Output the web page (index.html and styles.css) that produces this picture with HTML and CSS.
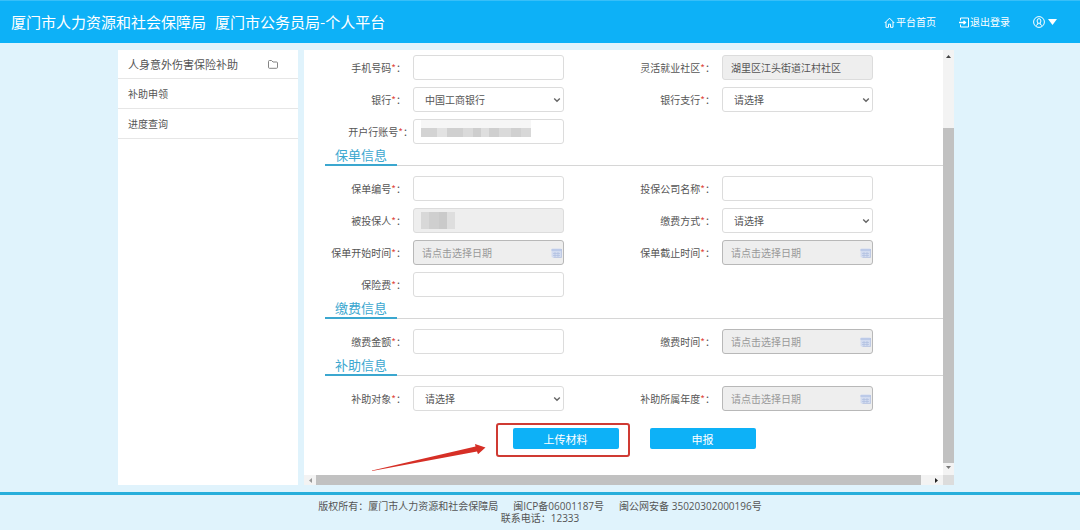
FILE: index.html
```html
<!DOCTYPE html>
<html lang="zh-CN">
<head>
<meta charset="utf-8">
<meta name="viewport" content="width=device-width, initial-scale=1">
<title>厦门市人力资源和社会保障局 个人平台</title>
<link rel="stylesheet" href="styles.css">
</head>
<body>
<svg class="sprite" aria-hidden="true">
  <symbol id="chevron" viewBox="0 0 8 6"><path d="M1.2 1.4 4 4.2l2.800-2.800" fill="none" stroke="#666" stroke-width="1.400"/></symbol>
  <symbol id="calendar" viewBox="0 0 11 10"><rect x=".5" y=".5" width="10" height="9" rx="1" fill="#d3dcf0"/><path d="M.5 1h10v2H.5z" fill="#bccae8"/><path d="M2 5.500h7M2 7.500h7M4 4v5M7 4v5M10.500 1v8.500h-8" fill="none" stroke="#b0bfe0" stroke-width=".7"/></symbol>
</svg>

<header class="topbar">
  <h1 class="brand"><span>厦门市人力资源和社会保障局</span><span>厦门市公务员局-个人平台</span></h1>
  <nav class="topnav">
    <a href="#"><svg width="11" height="11" viewBox="0 0 11 11" fill="none" stroke="#fff"><path d="M.7 6 5.500 1.200 10.300 6M2 5v5.300h2.500V7.200h2v3.100H9V5"/></svg>平台首页</a>
    <a href="#"><svg width="10" height="11" viewBox="0 0 10 11" fill="none" stroke="#fff"><path d="M1.500 3.500v-2.500h8v9h-8V7.500"/><path d="M0 5.500h6M4.500 3.800l2 1.700-2 1.700" stroke-width="1.300"/></svg>退出登录</a>
    <button class="user" type="button" aria-label="用户菜单"><svg width="12" height="12" viewBox="0 0 12 12" fill="none" stroke="#fff"><circle cx="6" cy="6" r="5.400"/><ellipse cx="6" cy="5" rx="1.900" ry="2.400"/><path d="M4.800 7v1.300L3 9.500M7.200 7v1.300L9 9.500"/></svg><svg width="9" height="6" viewBox="0 0 9 6"><path d="M0 0h9L4.500 6z" fill="#fff"/></svg></button>
  </nav>
</header>

<main class="layout">
  <aside class="sidebar">
    <a class="side-item side-title" href="#">人身意外伤害保险补助<svg width="10" height="9" viewBox="0 0 10 9" fill="none" stroke="#777" stroke-width=".9"><path d="M.5 7.300V1.500q0-1 1-1h2L5 2h3.500q1 0 1 1v4.300q0 1-1 1h-7q-1 0-1-1z"/></svg></a>
    <a class="side-item" href="#">补助申领</a>
    <a class="side-item" href="#">进度查询</a>
  </aside>

  <section class="panel">
    <form class="form">
      <div class="fields">
        <div class="field"><label for="phone">手机号码<i>*</i>：</label><div class="control"><input id="phone" type="text"></div></div>
        <div class="field"><label for="community">灵活就业社区<i>*</i>：</label><div class="control"><input id="community" type="text" value="湖里区江头街道江村社区" readonly></div></div>
        <div class="field"><label for="bank">银行<i>*</i>：</label><div class="control"><select id="bank"><option>中国工商银行</option></select><svg class="chevron"><use href="#chevron"/></svg></div></div>
        <div class="field"><label for="branch">银行支行<i>*</i>：</label><div class="control"><select id="branch"><option>请选择</option></select><svg class="chevron"><use href="#chevron"/></svg></div></div>
        <div class="field field-long"><label for="account">开户行账号<i>*</i>：</label><div class="control"><input id="account" type="text"><span class="mask mask-account"></span></div></div>
      </div>

      <h2 class="section"><span>保单信息</span></h2>
      <div class="fields">
        <div class="field"><label for="policy">保单编号<i>*</i>：</label><div class="control"><input id="policy" type="text"></div></div>
        <div class="field"><label for="company">投保公司名称<i>*</i>：</label><div class="control"><input id="company" type="text"></div></div>
        <div class="field"><label for="insured">被投保人<i>*</i>：</label><div class="control"><input id="insured" type="text" readonly><span class="mask mask-name"></span></div></div>
        <div class="field"><label for="method">缴费方式<i>*</i>：</label><div class="control"><select id="method"><option>请选择</option></select><svg class="chevron"><use href="#chevron"/></svg></div></div>
        <div class="field"><label for="start">保单开始时间<i>*</i>：</label><div class="control"><input id="start" class="date" type="text" placeholder="请点击选择日期" readonly><svg class="calendar"><use href="#calendar"/></svg></div></div>
        <div class="field"><label for="end">保单截止时间<i>*</i>：</label><div class="control"><input id="end" class="date" type="text" placeholder="请点击选择日期" readonly><svg class="calendar"><use href="#calendar"/></svg></div></div>
        <div class="field"><label for="premium">保险费<i>*</i>：</label><div class="control"><input id="premium" type="text"></div></div>
      </div>

      <h2 class="section"><span>缴费信息</span></h2>
      <div class="fields">
        <div class="field"><label for="amount">缴费金额<i>*</i>：</label><div class="control"><input id="amount" type="text"></div></div>
        <div class="field"><label for="paytime">缴费时间<i>*</i>：</label><div class="control"><input id="paytime" class="date" type="text" placeholder="请点击选择日期" readonly><svg class="calendar"><use href="#calendar"/></svg></div></div>
      </div>

      <h2 class="section"><span>补助信息</span></h2>
      <div class="fields">
        <div class="field"><label for="target">补助对象<i>*</i>：</label><div class="control"><select id="target"><option>请选择</option></select><svg class="chevron"><use href="#chevron"/></svg></div></div>
        <div class="field"><label for="year">补助所属年度<i>*</i>：</label><div class="control"><input id="year" class="date" type="text" placeholder="请点击选择日期" readonly><svg class="calendar"><use href="#calendar"/></svg></div></div>
      </div>

      <div class="actions">
        <div class="marked">
          <button class="primary" type="button">上传材料</button>
          <span class="frame"></span>
          <svg class="arrow" viewBox="0 0 116 28"><path d="M1 26.500 104.500 2.500 104 0 114.500 3.500 107 10.300 106 7.500 1 27z" fill="#d62f26"/></svg>
        </div>
        <button class="primary" type="submit">申报</button>
      </div>
    </form>

    <div class="vbar" aria-hidden="true">
      <svg width="5" height="3" viewBox="0 0 5 3"><path d="M2.500 0 5 3H0z" fill="#444"/></svg>
      <span class="vthumb"></span>
      <svg width="5" height="3" viewBox="0 0 5 3"><path d="M0 0h5L2.500 3z" fill="#777"/></svg>
    </div>
    <div class="hbar" aria-hidden="true">
      <svg width="3" height="5" viewBox="0 0 3 5"><path d="M3 0v5L0 2.500z" fill="#999"/></svg>
      <span class="hthumb"></span>
      <svg width="3" height="5" viewBox="0 0 3 5"><path d="M0 0l3 2.500L0 5z" fill="#222"/></svg>
    </div>
    <span class="corner"></span>
  </section>
</main>

<footer class="footer">
  <p><span>版权所有：厦门市人力资源和社会保障局</span><span>闽ICP备06001187号</span><span>闽公网安备 35020302000196号</span></p>
  <p>联系电话：12333</p>
</footer>
</body>
</html>
```
FILE: styles.css
```css
* { box-sizing: border-box; }

body {
  margin: 0;
  min-height: 100vh;
  display: flex;
  flex-direction: column;
  background: #e0f3fc;
  color: #555;
  font-family: "Noto Sans CJK SC", sans-serif;
  font-size: 10px;
  line-height: 12px;
}

a { color: inherit; text-decoration: none; }
h1, h2, p { margin: 0; font-weight: 400; }
.sprite { display: none; }

.topbar {
  display: flex;
  align-items: center;
  justify-content: space-between;
  height: 43px;
  padding: 0 23px 0 11px;
  border-top: 1px solid #38bff8;
  background: #0db1f7;
  color: #fff;
}
.brand { display: flex; gap: 9px; font-size: 15px; line-height: 20px; }
.topnav { display: flex; align-items: center; gap: 23px; }
.topnav a { display: flex; align-items: center; gap: 1px; }
.user {
  display: flex;
  align-items: center;
  gap: 3px;
  padding: 0;
  border: 0;
  background: none;
}

.layout {
  flex: 1;
  display: flex;
  gap: 6px;
  padding: 7px 126px 7px 118px;
}
.sidebar { flex: 0 0 180px; background: #fff; }
.side-item {
  display: flex;
  align-items: center;
  justify-content: space-between;
  height: 30px;
  padding: 0 20px 0 10px;
  border-bottom: 1px solid #e6e6e6;
}
.side-title { height: 29px; font-size: 11px; }

.panel {
  flex: 1;
  display: grid;
  grid-template-columns: 1fr 11px;
  grid-template-rows: 1fr 10px;
  background: #fff;
}
.form { padding: 5px 0 26px 21px; }
.fields {
  display: grid;
  grid-template-columns: 1fr 1fr;
  row-gap: 7px;
}
.field { display: flex; align-items: center; }
.field label {
  flex: 0 0 81px;
  margin-right: 7px;
  text-align: right;
  white-space: nowrap;
}
.field-long label { flex-basis: 88px; margin-right: 0; }
.field i { color: #e0483e; font-style: normal; }
.control { position: relative; flex: 0 1 151px; }

input, select {
  display: block;
  width: 100%;
  height: 25px;
  padding: 0 8px;
  border: 1px solid #dcdcdc;
  border-radius: 3px;
  background: #fff;
  color: #555;
  font: inherit;
  outline: 0;
}
select { padding: 0 11px; appearance: none; }
input[readonly] { background: #eee; }
input.date { border-color: #b8b8b8; }
input::placeholder { color: #999; opacity: 1; }

.chevron, .calendar { position: absolute; pointer-events: none; }
.chevron { top: 10px; right: 3px; width: 8px; height: 6px; }
.calendar { top: 8px; right: 2px; width: 11px; height: 10px; }
.mask { position: absolute; left: 8px; }
.mask-account {
  top: 1px;
  width: 110px;
  height: 17px;
  background:
    linear-gradient(#f6f6f6 8px, transparent 8px),
    linear-gradient(90deg, #d3d3d3 16px, #e2e2e2 16px 26px, #d0d0d0 26px 42px, #dadada 42px 52px, #cecece 52px 60px, #dedede 60px 68px, #cfcfcf 68px 78px, #dadada 78px 90px, #d0d0d0 90px 100px, #d8d8d8 100px);
}
.mask-name {
  top: 4px;
  width: 34px;
  height: 17px;
  background: linear-gradient(90deg, #d8d8d8 8px, #cfcfcf 8px 18px, #cacaca 18px 26px, #dedede 26px);
}

.section {
  height: 22px;
  margin-bottom: 10px;
  border-bottom: 1px solid #d6d6d6;
  color: #3ba7cf;
  font-size: 13px;
  line-height: 22px;
}
.section span {
  display: inline-block;
  height: 22px;
  padding: 0 10px;
  border-bottom: 2px solid #3ba7cf;
}

.actions {
  display: flex;
  justify-content: center;
  gap: 31px;
  margin-top: 17px;
}
.marked { position: relative; }
.primary {
  display: block;
  width: 106px;
  height: 21px;
  padding: 0;
  border: 0;
  border-radius: 2px;
  background: #0db1f7;
  color: #fff;
  font: inherit;
  font-size: 11px;
}
.frame {
  position: absolute;
  inset: -5px -11px -8px -17px;
  border: 2px solid #cf3a33;
  border-radius: 3px;
  pointer-events: none;
}
.arrow {
  position: absolute;
  top: 16px;
  right: 132px;
  width: 116px;
  height: 28px;
}

.vbar {
  display: flex;
  flex-direction: column;
  align-items: center;
  gap: 3px;
  padding: 5px 0 6px;
  background: #f3f3f3;
}
.vthumb { flex: 1; width: 100%; margin-top: 67px; background: #c1c1c1; }
.hbar {
  display: flex;
  align-items: center;
  gap: 4px;
  padding: 0 5px;
  background: #f3f3f3;
}
.hthumb { flex: 1; height: 100%; margin-right: 10px; background: #c1c1c1; }
.corner { background: #dcdcdc; }

.footer {
  padding: 5px 0 6px;
  border-top: 3px solid #28aedb;
  text-align: center;
}
.footer p { display: flex; justify-content: center; gap: 15px; font-family: "Open Sans", "Noto Sans CJK SC", sans-serif; }
```
